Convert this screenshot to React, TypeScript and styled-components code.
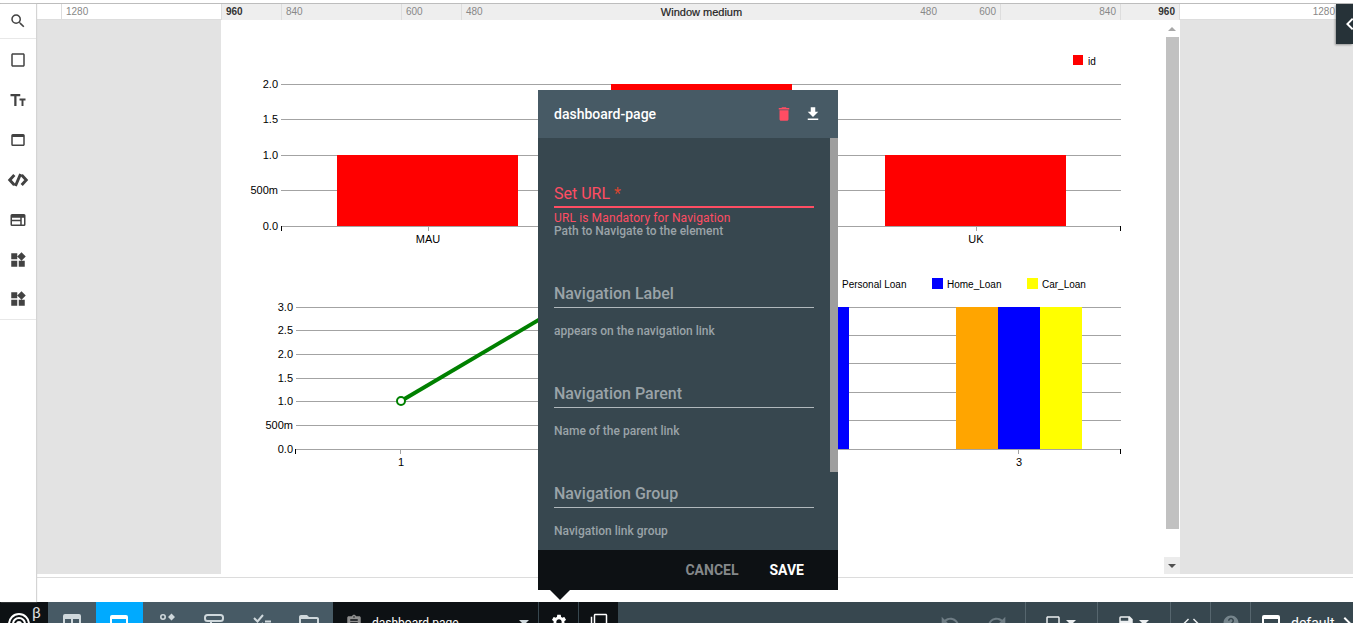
import React from "react";
import styled, { createGlobalStyle } from "styled-components";
import {
  MdSearch,
  MdCheckBoxOutlineBlank,
  MdWebAsset,
  MdWidgets,
  MdDelete,
  MdFileDownload,
  MdAssignment,
  MdSettings,
  MdFilterNone,
  MdUndo,
  MdRedo,
  MdSave,
  MdCode,
  MdHelp,
  MdChevronRight,
  MdChevronLeft,
  MdFolderOpen,
  MdArrowDropDown,
} from "react-icons/md";

const GlobalStyle = createGlobalStyle`
  html, body {
    margin: 0;
    padding: 0;
    overflow: hidden;
    background: #fff;
  }
`;

const Shell = styled.div`
  position: relative;
  width: 1353px;
  height: 623px;
  overflow: hidden;
  font-family: "Liberation Sans", Arial, sans-serif;
  background: #fff;
`;

const TopEdge = styled.div`
  height: 3px;
  border-bottom: 1px solid #bdbdbd;
`;

const Main = styled.div`
  display: flex;
  height: 598px;
`;

const Sidebar = styled.div`
  width: 36px;
  flex: none;
  background: #fff;
  box-shadow: 1px 0 1px #d4d4d4;
  position: relative;
  z-index: 1;
  color: #424242;
`;

const SearchCell = styled.div`
  height: 34px;
  margin-bottom: 1px;
  border-bottom: 1px solid #e8e8e8;
  display: flex;
  align-items: center;
  justify-content: center;
`;

const Tools = styled.div`
  border-bottom: 1px solid #e8e8e8;
`;

const Tool = styled.div`
  height: 40px;
  display: flex;
  align-items: center;
  justify-content: center;

  &:last-child {
    height: 39px;
    padding-bottom: 1px;
    box-sizing: border-box;
  }
`;

const Workspace = styled.div`
  flex: 1;
  min-width: 0;
  display: flex;
  flex-direction: column;
`;

const Ruler = styled.div`
  height: 16px;
  display: flex;
  font-size: 10px;
  line-height: 16px;
`;

const RulerPad = styled.div`
  width: 25px;
  flex: none;
  box-sizing: border-box;
  border-bottom: 1px solid #ddd;
`;

const RulerSeg = styled.div<{ $w: number; $end?: boolean; $white?: boolean; $strong?: boolean }>`
  width: ${(p) => p.$w}px;
  flex: none;
  box-sizing: border-box;
  padding: 0 4px;
  display: flex;
  justify-content: ${(p) => (p.$end ? "flex-end" : "flex-start")};
  background: ${(p) => (p.$white ? "#fff" : "#eee")};
  color: ${(p) => (p.$strong ? "#333" : "#888")};
  font-weight: ${(p) => (p.$strong ? 700 : 400)};
  border-bottom: ${(p) => (p.$white ? "1px solid #ddd" : "none")};
  ${(p) => (p.$end ? "border-right" : "border-left")}: 1px solid #ddd;
`;

const RulerCenter = styled(RulerSeg)`
  justify-content: space-between;
`;

const WindowName = styled.span`
  color: #222;
  font-size: 11px;
  font-weight: 400;
  -webkit-text-stroke: 0.2px #222;
`;

const Canvas = styled.div`
  height: 554px;
  box-sizing: border-box;
  padding: 0 173px 0 185px;
  background: #e3e3e3;
`;

const Page = styled.div`
  height: 100%;
  background: #fff;
  display: flex;
`;

const Charts = styled.div`
  flex: 1;
  min-width: 0;
  display: flex;
  flex-direction: column;
`;

const ChartSvg = styled.svg`
  display: block;
  flex: none;
`;

const GridLine = styled.line`
  stroke: #a3a3a3;
  stroke-width: 1;
`;

const Tick = styled.line<{ $dark?: boolean }>`
  stroke: ${(p) => (p.$dark ? "#000" : "#a3a3a3")};
  stroke-width: 1;
`;

const AxisText = styled.text`
  font-family: "Liberation Sans", Arial, sans-serif;
  font-size: 11px;
  fill: #000;
`;

const LegendText = styled.text`
  font-family: "Liberation Sans", Arial, sans-serif;
  font-size: 10px;
  fill: #000;
`;

const PageScroll = styled.div`
  width: 16px;
  flex: none;
  display: flex;
  flex-direction: column;
  align-items: center;
  background: #fff;
`;

const ScrollArrow = styled.div<{ $down?: boolean }>`
  width: 16px;
  height: 17px;
  flex: none;
  display: flex;
  align-items: center;
  justify-content: center;
  background: ${(p) => (p.$down ? "#ececec" : "#fff")};

  &::before {
    content: "";
    border-left: 4px solid transparent;
    border-right: 4px solid transparent;
    ${(p) =>
      p.$down ? "border-top: 4px solid #505050;" : "border-bottom: 4px solid #a8a8a8;"}
  }
`;

const ScrollThumb = styled.div`
  width: 13px;
  height: 492px;
  flex: none;
  background: #c1c1c1;
`;

const ScrollRest = styled.div`
  flex: 1;
  width: 16px;
  background: #fff;
`;

const FootStrip = styled.div`
  height: 28px;
  box-sizing: border-box;
  padding-top: 3px;
  background: #fff;

  &::before {
    content: "";
    display: block;
    height: 1px;
    background: #dcdcdc;
  }
`;

const PanelToggle = styled.div`
  position: absolute;
  left: 1336px;
  top: 4px;
  width: 17px;
  height: 40px;
  background: #263238;
  box-shadow: -1px 1px 2px rgba(0, 0, 0, 0.35);
  color: #fff;
  overflow: hidden;
  display: flex;
  align-items: center;

  svg {
    flex: none;
    margin-left: 2px;
  }
`;

const Popover = styled.div`
  position: absolute;
  left: 538px;
  top: 90px;
  width: 300px;
  height: 500px;
  display: flex;
  flex-direction: column;
  font-family: Roboto, "Liberation Sans", sans-serif;
  z-index: 2;

  &::after {
    content: "";
    position: absolute;
    left: 12px;
    top: 100%;
    border-left: 10px solid transparent;
    border-right: 10px solid transparent;
    border-top: 10px solid #0d1114;
  }
`;

const PopHeader = styled.div`
  height: 48px;
  flex: none;
  box-sizing: border-box;
  padding: 0 16px;
  display: flex;
  align-items: center;
  background: #475a65;
  color: #fff;
`;

const PopTitle = styled.div`
  flex: 1;
  font-size: 14px;
  font-weight: 500;
`;

const HeaderIcon = styled.span<{ $danger?: boolean }>`
  display: flex;
  margin-left: 11px;
  color: ${(p) => (p.$danger ? "#ff4d63" : "#fff")};
`;

const PopBody = styled.div`
  flex: 1;
  min-height: 0;
  display: flex;
  overflow: hidden;
  background: #37474f;
`;

const Fields = styled.div`
  flex: 1;
  min-width: 0;
  padding: 0 16px;
`;

const PopThumb = styled.div`
  width: 8px;
  height: 334px;
  flex: none;
  background: #9e9e9e;
`;

const Field = styled.div`
  height: 100px;
  box-sizing: border-box;
  padding-top: 44px;
`;

const InputLine = styled.div<{ $error?: boolean }>`
  height: 26px;
  box-sizing: border-box;
  font-size: 16px;
  line-height: 24px;
  font-weight: ${(p) => (p.$error ? 400 : 500)};
  color: ${(p) => (p.$error ? "#ff4d63" : "#9aa3a8")};
  border-bottom: ${(p) => (p.$error ? "2px solid #ff4d63" : "1px solid #b0b8bc")};
`;

const Star = styled.span`
  color: #d9452f;
`;

const ErrorText = styled.div`
  margin-top: 4px;
  font-size: 12px;
  line-height: 13px;
  letter-spacing: 0.13px;
  color: #ff4d63;
`;

const Hint = styled.div<{ $tight?: boolean }>`
  margin-top: ${(p) => (p.$tight ? 0 : 17)}px;
  font-size: 12px;
  line-height: 12px;
  font-weight: 500;
  color: #9aa3a8;
`;

const PopFooter = styled.div`
  height: 40px;
  flex: none;
  box-sizing: border-box;
  padding-right: 34px;
  display: flex;
  align-items: center;
  justify-content: flex-end;
  gap: 31px;
  background: #0d1114;
  font-size: 14px;
  font-weight: 700;
`;

const FooterButton = styled.div<{ $muted?: boolean }>`
  color: ${(p) => (p.$muted ? "#84888a" : "#fff")};
`;

const Bar = styled.div`
  height: 48px;
  display: flex;
  background: #37474f;
  color: #cfd8dc;
  font-family: Roboto, "Liberation Sans", sans-serif;
`;

const Logo = styled.div`
  width: 48px;
  flex: none;
  position: relative;
  background: #0d1114;
  color: #fff;
`;

const Beta = styled.span`
  position: absolute;
  left: 32px;
  top: 4px;
  font-size: 15px;
  line-height: 14px;
  color: #e0e0e0;
`;

const NavGroup = styled.div`
  display: flex;
  flex: none;
  background: #475a65;
`;

const NavCell = styled.div<{ $active?: boolean }>`
  width: 47.5px;
  flex: none;
  padding-top: 9px;
  box-sizing: border-box;
  display: flex;
  justify-content: center;
  background: ${(p) => (p.$active ? "#00aaff" : "transparent")};
  color: ${(p) => (p.$active ? "#fff" : "#cfd8dc")};
  align-self: stretch;
`;

const PageTab = styled.div`
  width: 205px;
  flex: none;
  box-sizing: border-box;
  padding: 12px 6px 0 12px;
  display: flex;
  gap: 9px;
  background: #0d1114;
  color: #8f8f8f;
  position: relative;
`;

const PageName = styled.span`
  flex: 1;
  color: #fff;
  font-size: 12px;
  line-height: 14px;
  margin-top: 2px;
`;

const DarkCell = styled.div<{ $top: number }>`
  width: 40px;
  flex: none;
  box-sizing: border-box;
  padding-top: ${(p) => p.$top}px;
  display: flex;
  justify-content: center;
  background: #0d1114;
  border-left: 1px solid #37474f;
  color: #fff;
`;

const HistoryGroup = styled.div`
  flex: 1;
  display: flex;
  justify-content: flex-end;
  gap: 27px;
  padding: 9px 18px 0 0;
  color: #6f7d85;
`;

const ActionCell = styled.div<{ $w: number; $dim?: boolean }>`
  width: ${(p) => p.$w}px;
  flex: none;
  box-sizing: border-box;
  padding-top: 12px;
  display: flex;
  justify-content: center;
  border-left: 1px solid #56666e;
  color: ${(p) => (p.$dim ? "#76858c" : "#eceff1")};
`;

const Caret = styled.span`
  display: flex;
  height: 24px;
  margin: -4px -4px 0 -3px;
`;

const WindowCell = styled.div`
  width: 103px;
  flex: none;
  box-sizing: border-box;
  padding: 9px 0 0 8px;
  display: flex;
  gap: 8px;
  border-left: 1px solid #56666e;
  color: #fff;
  overflow: hidden;

  > * {
    flex: none;
  }
`;

const WindowLabel = styled.span`
  font-size: 14px;
  line-height: 16px;
  margin-top: 4px;
`;

const WindowChevron = styled(MdChevronRight)`
  margin-left: -8px;
`;

const glyph = { width: 24, height: 24, viewBox: "0 0 24 24", fill: "currentColor" };

const TextSizeIcon = () => (
  <svg width="18" height="18" viewBox="0 0 24 24" fill="currentColor">
    <path d="M2 4h13v3h-5v13H7V7H2zM14 10h8v2.500h-2.700V20h-2.600v-7.500H14z" />
  </svg>
);

const SlashCodeIcon = () => (
  <svg width="22" height="22" viewBox="0 0 24 24" fill="none" stroke="currentColor" strokeWidth="3.2">
    <path d="M8 6.500 3 12l5 5.500M16 6.500l5 5.500-5 5.500M14.800 5.500 9.200 18.500" />
  </svg>
);

const LayoutIcon = () => (
  <svg width="18" height="18" viewBox="0 0 24 24" fill="currentColor">
    <path
      fillRule="evenodd"
      d="M4 4h16a2 2 0 0 1 2 2v12a2 2 0 0 1-2 2H4a2 2 0 0 1-2-2V6a2 2 0 0 1 2-2zm0 5v2.500h11V9H4zm13 0v9h3V9h-3zM4 13.500V18h11v-4.500H4z"
    />
  </svg>
);

const GridIcon = () => (
  <svg {...glyph}>
    <path
      fillRule="evenodd"
      d="M5 3h14a2 2 0 0 1 2 2v14a2 2 0 0 1-2 2H5a2 2 0 0 1-2-2V5a2 2 0 0 1 2-2zm0 5v11h6V8H5zm8 0v11h6V8h-6z"
    />
  </svg>
);

const ElementsIcon = () => (
  <svg {...glyph}>
    <path
      fillRule="evenodd"
      d="M8 3a3 3 0 1 1 0 6 3 3 0 0 1 0-6zm0 1.600a1.400 1.400 0 1 0 0 2.800 1.400 1.400 0 0 0 0-2.800zM16.500 2.500 20 6l-3.500 3.500L13 6zM4 13h7v8H4zm9 0h7v8h-7z"
    />
  </svg>
);

const SignIcon = () => (
  <svg {...glyph} fill="none" stroke="currentColor" strokeWidth="2">
    <rect x="3" y="4" width="18" height="6" rx="2.500" />
    <path d="M9 10v11" />
  </svg>
);

const ChecksIcon = () => (
  <svg {...glyph} fill="none" stroke="currentColor" strokeWidth="2">
    <path d="M4 7l3.500 3.500L13 4M15 10.500h6M15 19h6M4 15l3.500 3.500L13 12" />
  </svg>
);

const yLabels1 = ["2.0", "1.5", "1.0", "500m", "0.0"];
const yRows1 = [84, 119, 155, 190, 226];
const bars1 = [
  { x: 337, y: 155, label: "MAU" },
  { x: 611, y: 84, label: "" },
  { x: 885, y: 155, label: "UK" },
];

const yLabels2 = ["3.0", "2.5", "2.0", "1.5", "1.0", "500m", "0.0"];
const yRows2 = [307, 330, 354, 378, 401, 425, 449];
const yRowsRight = [307, 335, 363, 392, 420, 449];

const loanGroups = [
  { x: 765, colors: ["orange", "blue"] },
  { x: 956, colors: ["orange", "blue", "yellow"] },
];

const rulerLeft = [
  { w: 160, text: "1280", white: true },
  { w: 60, text: "960", strong: true },
  { w: 120, text: "840" },
  { w: 60, text: "600" },
];

const rulerRight = [
  { w: 60, text: "600" },
  { w: 120, text: "840" },
  { w: 59, text: "960", strong: true },
  { w: 160, text: "1280", white: true },
];

const fields = [
  { label: "Navigation Label", hint: "appears on the navigation link" },
  { label: "Navigation Parent", hint: "Name of the parent link" },
  { label: "Navigation Group", hint: "Navigation link group" },
];

export default function App() {
  return (
    <Shell>
      <GlobalStyle />
      <TopEdge />
      <Main>
        <Sidebar>
          <SearchCell>
            <MdSearch size={18} />
          </SearchCell>
          <Tools>
            <Tool><MdCheckBoxOutlineBlank size={18} /></Tool>
            <Tool><TextSizeIcon /></Tool>
            <Tool><MdWebAsset size={18} /></Tool>
            <Tool><SlashCodeIcon /></Tool>
            <Tool><LayoutIcon /></Tool>
            <Tool><MdWidgets size={18} /></Tool>
            <Tool><MdWidgets size={18} /></Tool>
          </Tools>
        </Sidebar>
        <Workspace>
          <Ruler>
            <RulerPad />
            {rulerLeft.map((s) => (
              <RulerSeg key={"l" + s.w} $w={s.w} $white={s.white} $strong={s.strong}>
                {s.text}
              </RulerSeg>
            ))}
            <RulerCenter $w={480}>
              <span>480</span>
              <WindowName>Window medium</WindowName>
              <span>480</span>
            </RulerCenter>
            {rulerRight.map((s) => (
              <RulerSeg key={"r" + s.w} $w={s.w} $end $white={s.white} $strong={s.strong}>
                {s.text}
              </RulerSeg>
            ))}
          </Ruler>
          <Canvas>
            <Page>
              <Charts>
                <ChartSvg width="943" height="250" viewBox="221 20 943 250">
                  <rect x="1073" y="55" width="10" height="10" fill="#f00" />
                  <LegendText x="1088" y="65">id</LegendText>
                  {yRows1.map((y, i) => (
                    <g key={y}>
                      <GridLine x1="281" x2="1121" y1={y + 0.5} y2={y + 0.5} />
                      <AxisText x="278" y={y + 4} textAnchor="end">{yLabels1[i]}</AxisText>
                    </g>
                  ))}
                  {bars1.map((b) => (
                    <g key={b.x}>
                      <rect x={b.x} y={b.y} width="181" height={226 - b.y} fill="#f00" />
                      <Tick x1={b.x + 91.5} x2={b.x + 91.5} y1="226" y2="231" />
                      <AxisText x={b.x + 91} y="243" textAnchor="middle">{b.label}</AxisText>
                    </g>
                  ))}
                  <Tick $dark x1="281.5" x2="281.5" y1="226" y2="231" />
                  <Tick $dark x1="1120.5" x2="1120.5" y1="226" y2="231" />
                </ChartSvg>
                <ChartSvg width="943" height="220" viewBox="221 270 943 220">
                  {yRows2.map((y, i) => (
                    <g key={y}>
                      <GridLine x1="296" x2="838" y1={y + 0.5} y2={y + 0.5} />
                      <AxisText x="293" y={y + 4} textAnchor="end">{yLabels2[i]}</AxisText>
                    </g>
                  ))}
                  {yRowsRight.map((y) => (
                    <GridLine key={y} x1="838" x2="1121" y1={y + 0.5} y2={y + 0.5} />
                  ))}
                  <LegendText x="842" y="288">Personal Loan</LegendText>
                  <rect x="932" y="278" width="11" height="11" fill="#00f" />
                  <LegendText x="947" y="288">Home_Loan</LegendText>
                  <rect x="1027" y="278" width="11" height="11" fill="#ff0" />
                  <LegendText x="1042" y="288">Car_Loan</LegendText>
                  {loanGroups.map((g) =>
                    g.colors.map((c, i) => (
                      <rect key={g.x + c} x={g.x + i * 42} y="307" width="42" height="142" fill={c} />
                    ))
                  )}
                  <polyline points="401,401 710,219" fill="none" stroke="#008000" strokeWidth="4" />
                  <circle cx="401" cy="401" r="4" fill="#fff" stroke="#008000" strokeWidth="2" />
                  <Tick x1="400.5" x2="400.5" y1="449" y2="454" />
                  <AxisText x="401" y="466" textAnchor="middle">1</AxisText>
                  <Tick x1="1018.5" x2="1018.5" y1="449" y2="454" />
                  <AxisText x="1019" y="466" textAnchor="middle">3</AxisText>
                  <Tick $dark x1="295.5" x2="295.5" y1="449" y2="454" />
                  <Tick $dark x1="1120.5" x2="1120.5" y1="449" y2="454" />
                </ChartSvg>
              </Charts>
              <PageScroll>
                <ScrollArrow />
                <ScrollThumb />
                <ScrollRest />
                <ScrollArrow $down />
              </PageScroll>
            </Page>
          </Canvas>
          <FootStrip />
        </Workspace>
      </Main>
      <Bar>
        <Logo>
          <svg width="48" height="21" viewBox="0 0 48 21" fill="none" stroke="#fff" strokeWidth="2">
            <path d="M9 22a10 10 0 0 1 20 0M13 22a6 6 0 0 1 12 0M17 22a2 2 0 0 1 4 0" />
          </svg>
          <Beta>β</Beta>
        </Logo>
        <NavGroup>
          <NavCell><GridIcon /></NavCell>
          <NavCell $active><MdWebAsset size={24} /></NavCell>
          <NavCell><ElementsIcon /></NavCell>
          <NavCell><SignIcon /></NavCell>
          <NavCell><ChecksIcon /></NavCell>
          <NavCell><MdFolderOpen size={24} /></NavCell>
        </NavGroup>
        <PageTab>
          <MdAssignment size={18} />
          <PageName>dashboard-page</PageName>
          <Caret><MdArrowDropDown size={24} color="#cfd8dc" /></Caret>
        </PageTab>
        <DarkCell $top={11}><MdSettings size={18} /></DarkCell>
        <DarkCell $top={11}><MdFilterNone size={18} /></DarkCell>
        <HistoryGroup>
          <MdUndo size={20} />
          <MdRedo size={20} />
        </HistoryGroup>
        <ActionCell $w={72}>
          <MdCheckBoxOutlineBlank size={18} />
          <Caret><MdArrowDropDown size={24} /></Caret>
        </ActionCell>
        <ActionCell $w={73}>
          <MdSave size={18} />
          <Caret><MdArrowDropDown size={24} /></Caret>
        </ActionCell>
        <ActionCell $w={40}><MdCode size={18} /></ActionCell>
        <ActionCell $w={40} $dim><MdHelp size={18} /></ActionCell>
        <WindowCell>
          <MdWebAsset size={24} />
          <WindowLabel>default</WindowLabel>
          <WindowChevron size={24} />
        </WindowCell>
      </Bar>
      <PanelToggle>
        <MdChevronLeft size={24} />
      </PanelToggle>
      <Popover>
        <PopHeader>
          <PopTitle>dashboard-page</PopTitle>
          <HeaderIcon $danger><MdDelete size={18} /></HeaderIcon>
          <HeaderIcon><MdFileDownload size={18} /></HeaderIcon>
        </PopHeader>
        <PopBody>
          <Fields>
            <Field>
              <InputLine $error>Set URL <Star>*</Star></InputLine>
              <ErrorText>URL is Mandatory for Navigation</ErrorText>
              <Hint $tight>Path to Navigate to the element</Hint>
            </Field>
            {fields.map((f) => (
              <Field key={f.label}>
                <InputLine>{f.label}</InputLine>
                <Hint>{f.hint}</Hint>
              </Field>
            ))}
          </Fields>
          <PopThumb />
        </PopBody>
        <PopFooter>
          <FooterButton $muted>CANCEL</FooterButton>
          <FooterButton>SAVE</FooterButton>
        </PopFooter>
      </Popover>
    </Shell>
  );
}
